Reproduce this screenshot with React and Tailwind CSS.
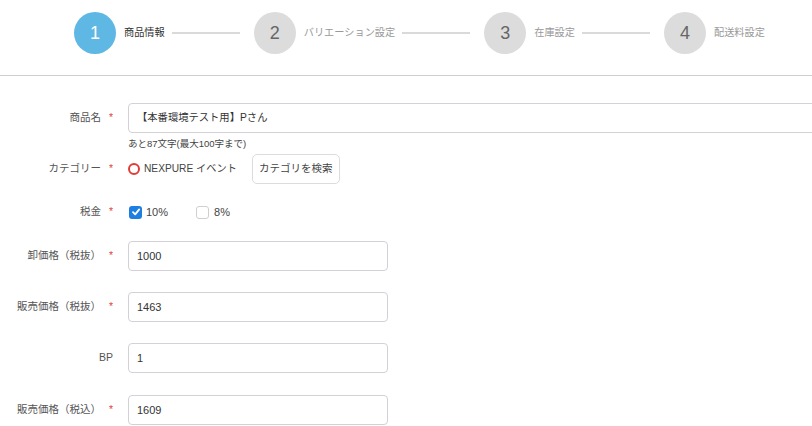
import React from "react";

const steps = [
  { n: 1, label: "商品情報", active: true },
  { n: 2, label: "バリエーション設定" },
  { n: 3, label: "在庫設定" },
  { n: 4, label: "配送料設定" },
];

const Req = () => <span className="ml-[8px] text-[#e0453f]">*</span>;

const Label = ({ children, required }) => (
  <div className="w-[113px] shrink-0 text-right text-[10.5px] text-[#555]">
    {children}
    {required && <Req />}
  </div>
);

const TextInput = ({ value, width = "w-[260px]", size = "text-[11px]" }) => (
  <div
    className={`${width} ${size} h-[30px] shrink-0 border border-[#d3d0d8] rounded-[4px] bg-white flex items-center px-[8px] text-[#333]`}
  >
    {value}
  </div>
);

const Check = ({ checked }) =>
  checked ? (
    <span className="block w-[13px] h-[13px] rounded-[3px] bg-[#1f7fe0] flex items-center justify-center">
      <svg width="10" height="10" viewBox="0 0 10 10">
        <path d="M2 5.2 L4.2 7.4 L8.2 2.4" fill="none" stroke="white" strokeWidth="1.8" strokeLinecap="round" strokeLinejoin="round" />
      </svg>
    </span>
  ) : (
    <span className="block w-[13px] h-[13px] rounded-[3px] border border-[#cfcfcf] bg-white" />
  );

const App = () => {
  return (
    <div className="w-[812px] h-[426px] overflow-hidden bg-white font-['Liberation_Sans','Noto_Sans_CJK_JP',sans-serif]">
      <header className="h-[76px] border-b border-[#cfcfcf] flex items-start pt-[12px] pl-[74px]">
        {steps.map((s, i) => (
          <div key={s.n} className={`flex items-center ${i > 0 ? "ml-[14px]" : ""}`}>
            <div
              className={`w-[42px] h-[42px] rounded-full flex items-center justify-center text-[18px] ${
                s.active ? "bg-[#5fb7e3] text-white" : "bg-[#dcdcdc] text-[#666]"
              }`}
            >
              {s.n}
            </div>
            <span className={`ml-[8px] text-[10.2px] ${s.active ? "text-[#333]" : "text-[#999]"}`}>
              {s.label}
            </span>
            {i < steps.length - 1 && <div className="ml-[7px] w-[68px] h-[2px] bg-[#dadada]" />}
          </div>
        ))}
      </header>

      <main className="pt-[27px]">
        <div className="flex items-center">
          <Label required>商品名</Label>
          <div className="ml-[15px]">
            <TextInput value="【本番環境テスト用】Pさん" width="w-[720px]" size="text-[10.3px]" />
          </div>
        </div>
        <div className="pl-[128px] mt-[4px] text-[9.5px] leading-[13px] text-[#444]">
          あと87文字(最大100字まで)
        </div>

        <div className="flex items-center mt-[4px] h-[30px]">
          <Label required>カテゴリー</Label>
          <div className="ml-[15px] flex items-center">
            <span className="block w-[12px] h-[12px] rounded-full border-[2.5px] border-[#e23b36]" />
            <span className="ml-[4px] text-[10.2px] text-[#444]">NEXPURE イベント</span>
            <button className="ml-[15px] w-[88px] h-[30px] border border-[#dcdcdc] rounded-[5px] text-[10.5px] text-[#444] bg-white">
              カテゴリを検索
            </button>
          </div>
        </div>

        <div className="flex items-center mt-[13px] h-[30px]">
          <Label required>税金</Label>
          <div className="ml-[16px] flex items-center text-[11px] text-[#444]">
            <Check checked />
            <span className="ml-[4px]">10%</span>
            <span className="ml-[28px] flex">
              <Check />
            </span>
            <span className="ml-[5px]">8%</span>
          </div>
        </div>

        <div className="flex items-center mt-[14px]">
          <Label required>卸価格（税抜）</Label>
          <div className="ml-[15px]">
            <TextInput value="1000" />
          </div>
        </div>

        <div className="flex items-center mt-[21px]">
          <Label required>販売価格（税抜）</Label>
          <div className="ml-[15px]">
            <TextInput value="1463" />
          </div>
        </div>

        <div className="flex items-center mt-[21px]">
          <Label>BP</Label>
          <div className="ml-[15px]">
            <TextInput value="1" />
          </div>
        </div>

        <div className="flex items-center mt-[22px]">
          <Label required>販売価格（税込）</Label>
          <div className="ml-[15px]">
            <TextInput value="1609" />
          </div>
        </div>
      </main>
    </div>
  );
};

export default App;
